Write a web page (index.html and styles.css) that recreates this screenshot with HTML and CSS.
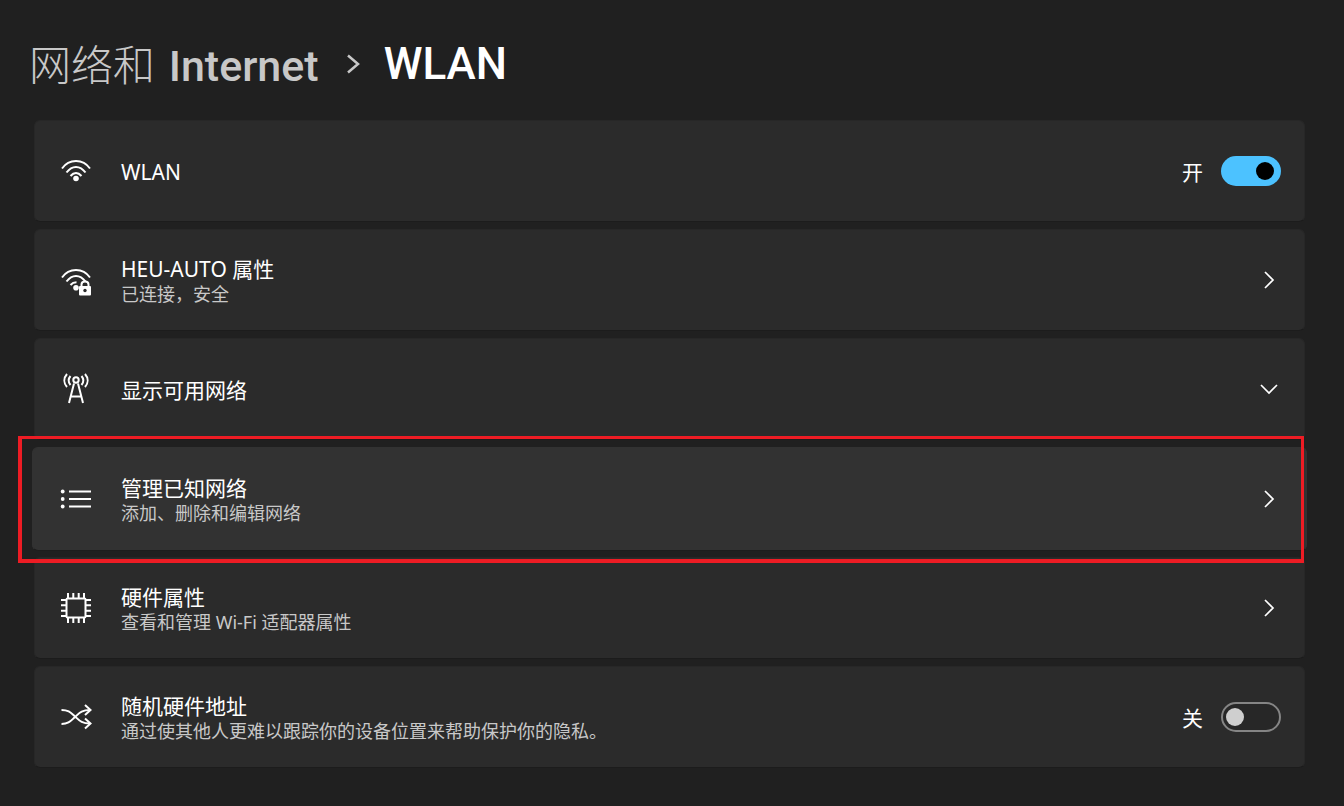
FILE: index.html
```html
<!DOCTYPE html>
<html>
<head>
  <meta charset="UTF-8">
  <title>网络和 Internet - WLAN</title>
  <link rel="stylesheet" href="styles.css">
</head>
<body>
  <div class="page">
    <h1 class="crumbs">
      <span class="crumb-parent"><span class="crumb-cjk">网络和</span> Internet</span>
      <svg class="crumb-sep" width="14" height="20" viewBox="0 0 14 20"><path d="M2 1.500 12 10 2 18.500"/></svg>
      <span class="crumb-current">WLAN</span>
    </h1>

    <div class="card-list">
      <div class="card">
        <svg class="icon" width="30" height="30" viewBox="0 0 30 30">
          <path d="M1 12.500C8 2.500 22 2.500 29 12.500"/>
          <path d="M5.500 16.500C11 9 19 9 24.500 16.500"/>
          <path d="M9.500 20C13 16 17 16 20.500 20"/>
          <circle class="fill" cx="15" cy="22.500" r="2.800"/>
        </svg>
        <div class="card-text"><div class="card-title">WLAN</div></div>
        <span class="state">开</span>
        <span class="toggle on"><span class="knob"></span></span>
      </div>

      <div class="card">
        <svg class="icon" width="30" height="32" viewBox="0 0 30 32">
          <path d="M1 13.500C8 3.500 22 3.500 29 13.500"/>
          <path d="M5.500 17.500C11 10 19 10 24.500 17.500"/>
          <path d="M9.500 21C11 19.300 13 18.300 15.500 18.300"/>
          <circle class="fill" cx="15" cy="23.800" r="2.800"/>
          <path class="thin" d="M20.500 22.500V20.500C20.500 16.500 27.500 16.500 27.500 20.500V22.500"/>
          <rect class="fill" x="18" y="22" width="12" height="9.500" rx="1"/>
          <circle class="hole" cx="24" cy="26.500" r="1.700"/>
        </svg>
        <div class="card-text">
          <div class="card-title">HEU-AUTO 属性</div>
          <div class="card-sub">已连接，安全</div>
        </div>
        <svg class="chevron" width="12" height="20" viewBox="0 0 12 20"><path d="M2 2 10 10 2 18"/></svg>
      </div>

      <div class="card">
        <svg class="icon" width="30" height="32" viewBox="0 0 30 32">
          <circle class="thin" cx="15" cy="7" r="2.700"/>
          <path class="thin" d="M13 10.500 8 30M17 10.500 22 30M10 23.500H20"/>
          <path class="thin" d="M9.500 3C7 6 7 9 9.500 12M20.500 3C23 6 23 9 20.500 12"/>
          <path class="thin" d="M6 1C2.500 5 2.500 10 6 14M24 1C27.500 5 27.500 10 24 14"/>
        </svg>
        <div class="card-text"><div class="card-title">显示可用网络</div></div>
        <svg class="chevron-down" width="20" height="12" viewBox="0 0 20 12"><path d="M2 2 10 10 18 2"/></svg>
      </div>

      <div class="card hovered">
        <svg class="icon" width="32" height="20" viewBox="0 0 32 20">
          <circle class="fill" cx="2.700" cy="2.500" r="1.900"/>
          <circle class="fill" cx="2.700" cy="10" r="1.900"/>
          <circle class="fill" cx="2.700" cy="17.500" r="1.900"/>
          <path d="M9 2.500H31M9 10H31M9 17.500H31"/>
        </svg>
        <div class="card-text">
          <div class="card-title">管理已知网络</div>
          <div class="card-sub">添加、删除和编辑网络</div>
        </div>
        <svg class="chevron" width="12" height="20" viewBox="0 0 12 20"><path d="M2 2 10 10 2 18"/></svg>
      </div>

      <div class="card">
        <svg class="icon" width="30" height="30" viewBox="0 0 30 30">
          <rect x="5.500" y="5.500" width="19" height="19" rx="1"/>
          <path class="thin" d="M7 0V5M12.300 0V5M17.700 0V5M23 0V5M7 25V30M12.300 25V30M17.700 25V30M23 25V30"/>
          <path class="thin" d="M0 7H5M0 12.300H5M0 17.700H5M0 23H5M25 7H30M25 12.300H30M25 17.700H30M25 23H30"/>
        </svg>
        <div class="card-text">
          <div class="card-title">硬件属性</div>
          <div class="card-sub">查看和管理 Wi-Fi 适配器属性</div>
        </div>
        <svg class="chevron" width="12" height="20" viewBox="0 0 12 20"><path d="M2 2 10 10 2 18"/></svg>
      </div>

      <div class="card">
        <svg class="icon" width="30" height="30" viewBox="0 0 30 30">
          <path d="M0.500 8C8 8 10 11 14 14.500C18 18 20 21.500 29 21.500"/>
          <path d="M0.500 22C8 22 10 18.500 14 15C18 11.500 20 8 29 8"/>
          <path d="M24 3 29.500 8 24 13M24 16.500 29.500 21.500 24 26.500"/>
        </svg>
        <div class="card-text">
          <div class="card-title">随机硬件地址</div>
          <div class="card-sub">通过使其他人更难以跟踪你的设备位置来帮助保护你的隐私。</div>
        </div>
        <span class="state">关</span>
        <span class="toggle off"><span class="knob"></span></span>
      </div>
    </div>

    <div class="callout"></div>
  </div>
</body>
</html>
```

FILE: styles.css
```css
* {
  box-sizing: border-box;
}
html, body {
  height: 100%;
}
body {
  margin: 0;
  background-color: #202020;
  color: #fff;
  font-family: "Noto Sans", "Noto Sans CJK SC", sans-serif;
  overflow: hidden;
}
.page {
  position: relative;
  height: 806px;
  padding: 0 39px 0 34px;
}

/* breadcrumb */
.crumbs {
  display: flex;
  align-items: center;
  height: 120px;
  margin: 0 0 0 -5px;
  padding-top: 8px;
  font-family: Roboto, "Noto Sans CJK SC", sans-serif;
  font-size: 43px;
  font-weight: 500;
  line-height: 50px;
}
.crumb-parent {
  color: #c8c8c8;
}
.crumb-cjk {
  margin-right: 3px;
  font-family: "Noto Sans CJK SC", sans-serif;
  font-size: 42px;
  font-weight: 300;
}
.crumb-sep {
  margin: 0 24px 0 27px;
  fill: none;
  stroke: #c8c8c8;
  stroke-width: 2.500;
}
.crumb-current {
  color: #fff;
  font-size: 44px;
}

/* settings rows */
.card-list {
  display: flex;
  flex-direction: column;
  gap: 7.7px;
}
.card {
  display: flex;
  align-items: center;
  height: 101.500px;
  padding: 0 23px 0 26px;
  background-color: #2b2b2b;
  border: 1px solid #272727;
  border-bottom-color: #1c1c1c;
  border-radius: 6px;
}
.card.hovered {
  height: 104px;
  margin: -1px -2px;
  padding: 0 25px 0 27px;
  background-color: #323232;
  border-color: #323232;
  border-bottom-color: #1d1d1d;
}
.icon {
  flex: none;
  fill: none;
  stroke: #fff;
  stroke-width: 2;
  overflow: visible;
}
.icon .thin {
  stroke-width: 2;
}
.icon .fill {
  fill: #fff;
  stroke: none;
}
.icon .hole {
  fill: #2b2b2b;
  stroke: none;
}
.card-text {
  flex: 1;
  margin-left: 30px;
  padding-top: 2px;
}
.card.hovered .card-text {
  margin-left: 29px;
}
.card-title {
  font-size: 21px;
  line-height: 26px;
}
.card-sub {
  color: #c8c8c8;
  font-size: 18px;
  line-height: 24px;
}
.state {
  margin-right: 18px;
  font-size: 21px;
}
.chevron {
  margin-right: 6px;
  fill: none;
  stroke: #fff;
  stroke-width: 1.700;
}
.chevron-down {
  margin-right: 2px;
  fill: none;
  stroke: #fff;
  stroke-width: 1.700;
}

/* toggle */
.toggle {
  display: flex;
  align-items: center;
  width: 60px;
  height: 30px;
  padding: 0 7px;
  border-radius: 15px;
}
.toggle.on {
  justify-content: flex-end;
  background-color: #4cc2ff;
}
.toggle.off {
  padding: 0 3px;
  border: 2px solid #858585;
  background-color: #272727;
}
.knob {
  width: 18px;
  height: 18px;
  border-radius: 50%;
}
.toggle.on .knob {
  background-color: #000;
}
.toggle.off .knob {
  background-color: #cfcfcf;
}

/* red annotation drawn over the screenshot */
.callout {
  position: absolute;
  left: 18px;
  top: 436px;
  width: 1286px;
  height: 127px;
  border-style: solid;
  border-color: #ed1c24;
  border-width: 3px 3px 4px 4px;
}
```
